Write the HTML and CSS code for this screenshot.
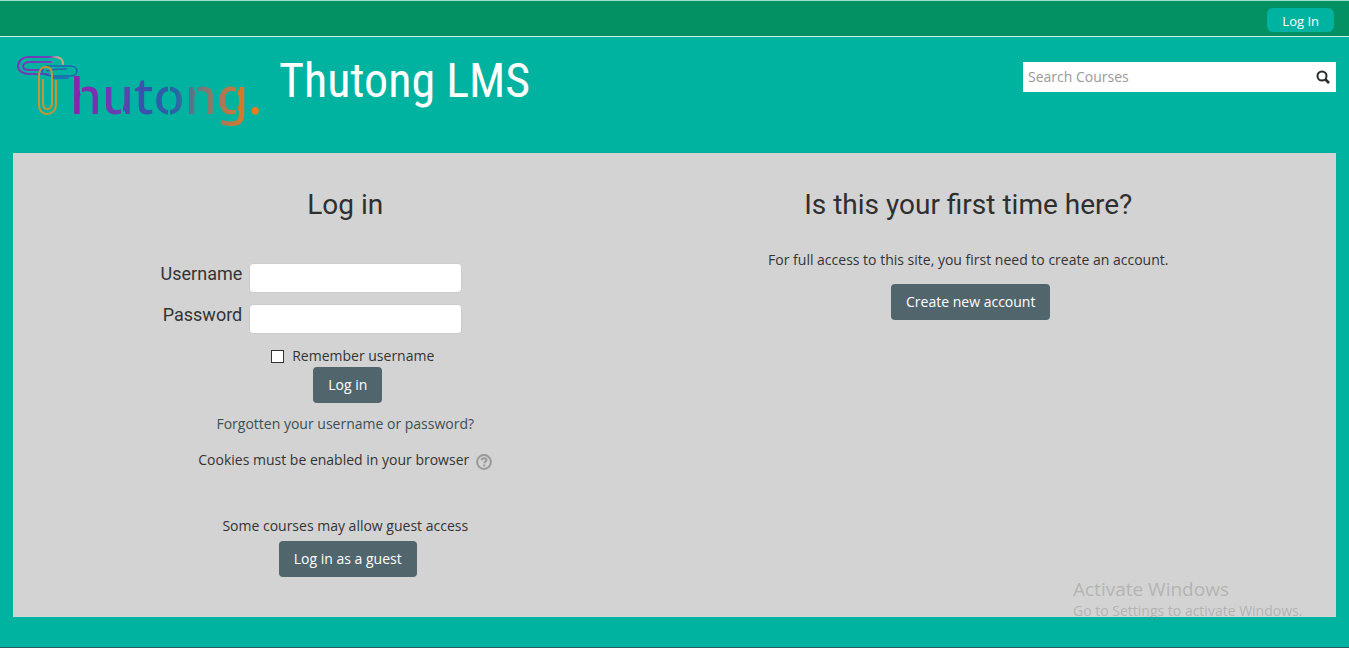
FILE: index.html
```html
<!DOCTYPE html>
<html lang="en">
<head>
<meta charset="utf-8">
<title>Thutong LMS: Log in to the site</title>
<link rel="stylesheet" href="styles.css">
</head>
<body>
<nav class="topbar"><a class="topbar-login" href="#login">Log In</a></nav>
<header class="header">
  <a class="logo" href="#home" aria-label="Thutong home">
    <svg width="250" height="80" viewBox="14 50 250 80" fill="none">
      <defs>
        <linearGradient id="word" gradientUnits="userSpaceOnUse" x1="74" y1="0" x2="260" y2="0">
          <stop offset="0" stop-color="#8a22b0"/>
          <stop offset=".22" stop-color="#6a3fb0"/>
          <stop offset=".4" stop-color="#3355ac"/>
          <stop offset=".55" stop-color="#2866a4"/>
          <stop offset=".66" stop-color="#647982"/>
          <stop offset=".78" stop-color="#a5785a"/>
          <stop offset=".9" stop-color="#d27a2e"/>
          <stop offset="1" stop-color="#ff7a0c"/>
        </linearGradient>
        <linearGradient id="clip" gradientUnits="userSpaceOnUse" x1="18" y1="0" x2="64" y2="0">
          <stop offset="0" stop-color="#7a35b5"/>
          <stop offset=".7" stop-color="#6b45b8"/>
          <stop offset=".85" stop-color="#c9a58d"/>
          <stop offset="1" stop-color="#dba878"/>
        </linearGradient>
      </defs>
      <text class="logo-word" x="70" y="114" fill="url(#word)">hutong.</text>
      <g stroke="#00b3a1" stroke-width="2">
        <path d="M81 86v8M122 106v10M169 84v10M169 106v10M196 85v8M237 86v7M237 106v7"/>
      </g>
      <g stroke-width="2" stroke-linecap="round">
        <path stroke="url(#clip)" d="M48 74H29c-6 0-11-3-11-8s5-9 10-9h27c5 0 8 3 8 7M43 70H29c-4 0-6-2-6-4s3-4 7-4h22"/>
        <path stroke="#2461b5" stroke-width="1.600" d="M47 66h23c4 0 7 2 7 5s-3 5-7 5H57c-9 0-15-1-15-5s4-5 9-5M47 71c5-2 10-2 19-2M52 78h16"/>
        <path stroke="#c69632" d="M39 75v30c0 5 3 9 8 9s9-4 9-9V81M39 75c0-5 3-8 7-8s6 3 6 8v28c0 4-2 6-5 6s-4-2-4-6V80"/>
      </g>
    </svg>
  </a>
  <h1 class="site-title">Thutong LMS</h1>
  <form class="search" role="search">
    <input class="search-input" type="search" placeholder="Search Courses" aria-label="Search Courses">
    <button class="search-button" type="button" aria-label="Search">
      <svg width="14" height="14" viewBox="0 0 14 14" fill="none" stroke="#292b2c" stroke-width="2"><circle cx="6" cy="6" r="4.5"/><path d="M9 9l4 4" stroke-width="2.6"/></svg>
    </button>
  </form>
</header>
<main class="content">
  <section class="panel panel-login" id="login">
    <h2 class="panel-title">Log in</h2>
    <form class="login-form">
      <div class="fields">
        <label class="field-label" for="username">Username</label>
        <input class="field-input" id="username" type="text">
        <label class="field-label" for="password">Password</label>
        <input class="field-input" id="password" type="password">
      </div>
      <label class="remember"><input class="remember-box" type="checkbox">Remember username</label>
      <button class="btn" type="button">Log in</button>
    </form>
    <a class="forgot" href="#forgot">Forgotten your username or password?</a>
    <p class="cookies">Cookies must be enabled in your browser
      <button class="help" type="button" aria-label="Help with cookies">
        <svg width="16" height="16" viewBox="0 0 16 16" fill="none" stroke="#999" stroke-width="2"><circle cx="8" cy="8" r="6.9"/><path d="M5.6 6.4C5.8 4.8 6.8 4.2 8 4.2c1.400 0 2.500.8 2.500 2 0 1.600-2.300 1.500-2.300 3.100M8.200 10.600v1.900"/></svg>
      </button>
    </p>
    <p class="guest-note">Some courses may allow guest access</p>
    <button class="btn" type="button">Log in as a guest</button>
  </section>
  <section class="panel panel-signup">
    <h2 class="panel-title">Is this your first time here?</h2>
    <p class="signup-note">For full access to this site, you first need to create an account.</p>
    <button class="btn" type="button">Create new account</button>
  </section>
</main>
<aside class="activation">
  <div class="activation-title">Activate Windows</div>
  <div class="activation-text">Go to Settings to activate Windows.</div>
</aside>
</body>
</html>
```
FILE: styles.css
```css
* { box-sizing: border-box; }
body {
  margin: 0;
  min-height: 100vh;
  background: #00b3a1;
  border-top: 1px solid #99e0d0;
  border-bottom: 1px solid #2a5a63;
  color: #333;
  font: 14px/20px "Open Sans", sans-serif;
}
h1, h2, p { margin: 0; font-weight: 400; }
a { text-decoration: none; }
button { font: inherit; cursor: pointer; }
.topbar {
  display: flex;
  justify-content: flex-end;
  height: 36px;
  padding: 7px 15px 4px;
  background: #039063;
  border-bottom: 1px solid #d5f3e5;
}
.topbar-login {
  padding: 3px 15px;
  border-radius: 6px;
  background: #00b3a1;
  color: #fff;
  font-size: 13px;
}
.header {
  display: flex;
  align-items: flex-start;
  height: 116px;
  padding: 13px 13px 0 14px;
}
.logo { display: flex; }
.logo svg { overflow: visible; }
.logo-word { font: 500 51px "Noto Sans", sans-serif; }
.site-title {
  margin-left: 15px;
  color: #fff;
  font: 400 48px/62px "Roboto Condensed", Roboto, sans-serif;
}
.search {
  display: flex;
  align-items: center;
  width: 313px;
  height: 30px;
  margin: 12px 0 0 auto;
  background: #fff;
}
.search-input {
  flex: 1;
  min-width: 0;
  padding: 0 5px;
  border: 0;
  background: transparent;
  font: inherit;
}
.search-input::placeholder { color: #999; opacity: 1; }
.search-button { display: flex; padding: 0 6px; border: 0; background: none; }
.content {
  display: grid;
  grid-template-columns: 1fr 1fr;
  min-height: 464px;
  margin: 0 13px;
  padding-bottom: 40px;
  background: #d3d3d3;
}
.panel {
  display: flex;
  flex-direction: column;
  align-items: center;
  padding-top: 32px;
}
.panel-login { padding-left: 3px; }
.panel-signup { padding-right: 74px; }
.panel-title {
  color: #2f2f2f;
  font: 400 28px/40px Roboto, sans-serif;
}
.login-form {
  display: flex;
  flex-direction: column;
  align-items: center;
  margin-top: 38px;
}
.fields {
  display: grid;
  grid-template-columns: 90px 213px;
  gap: 11px 7px;
  margin-right: 76px;
}
.field-label { text-align: right; font: 18px/22px Roboto, sans-serif; }
.field-input {
  height: 30px;
  padding: 4px 6px;
  border: 1px solid #ccc;
  border-radius: 4px;
  background: #fff;
  font: inherit;
}
.remember {
  display: flex;
  align-items: center;
  gap: 8px;
  margin: 12px 0 1px 15px;
}
.remember-box {
  appearance: none;
  width: 13px;
  height: 13px;
  margin: 0;
  border: 1px solid #333;
  background: #fff;
}
.remember-box:checked { background: #51666c; }
.btn {
  height: 36px;
  margin-left: 5px;
  padding: 0 15px;
  border: 0;
  border-radius: 4px;
  background: #51666c;
  color: #fff;
}
.forgot { margin-top: 11px; color: #3b4f54; }
.cookies { display: flex; gap: 7px; margin-top: 16px; }
.help { display: flex; padding: 4px 0 0; border: 0; background: none; }
.guest-note { margin: 46px 0 5px; }
.signup-note { margin: 25px 0 14px; }
.activation {
  position: absolute;
  right: 40px;
  bottom: 27px;
  width: 236px;
  color: rgb(130 130 130 / 40%);
  pointer-events: none;
}
.activation-title { font-size: 19px; line-height: 24px; }
.activation-text { line-height: 20px; }
```
